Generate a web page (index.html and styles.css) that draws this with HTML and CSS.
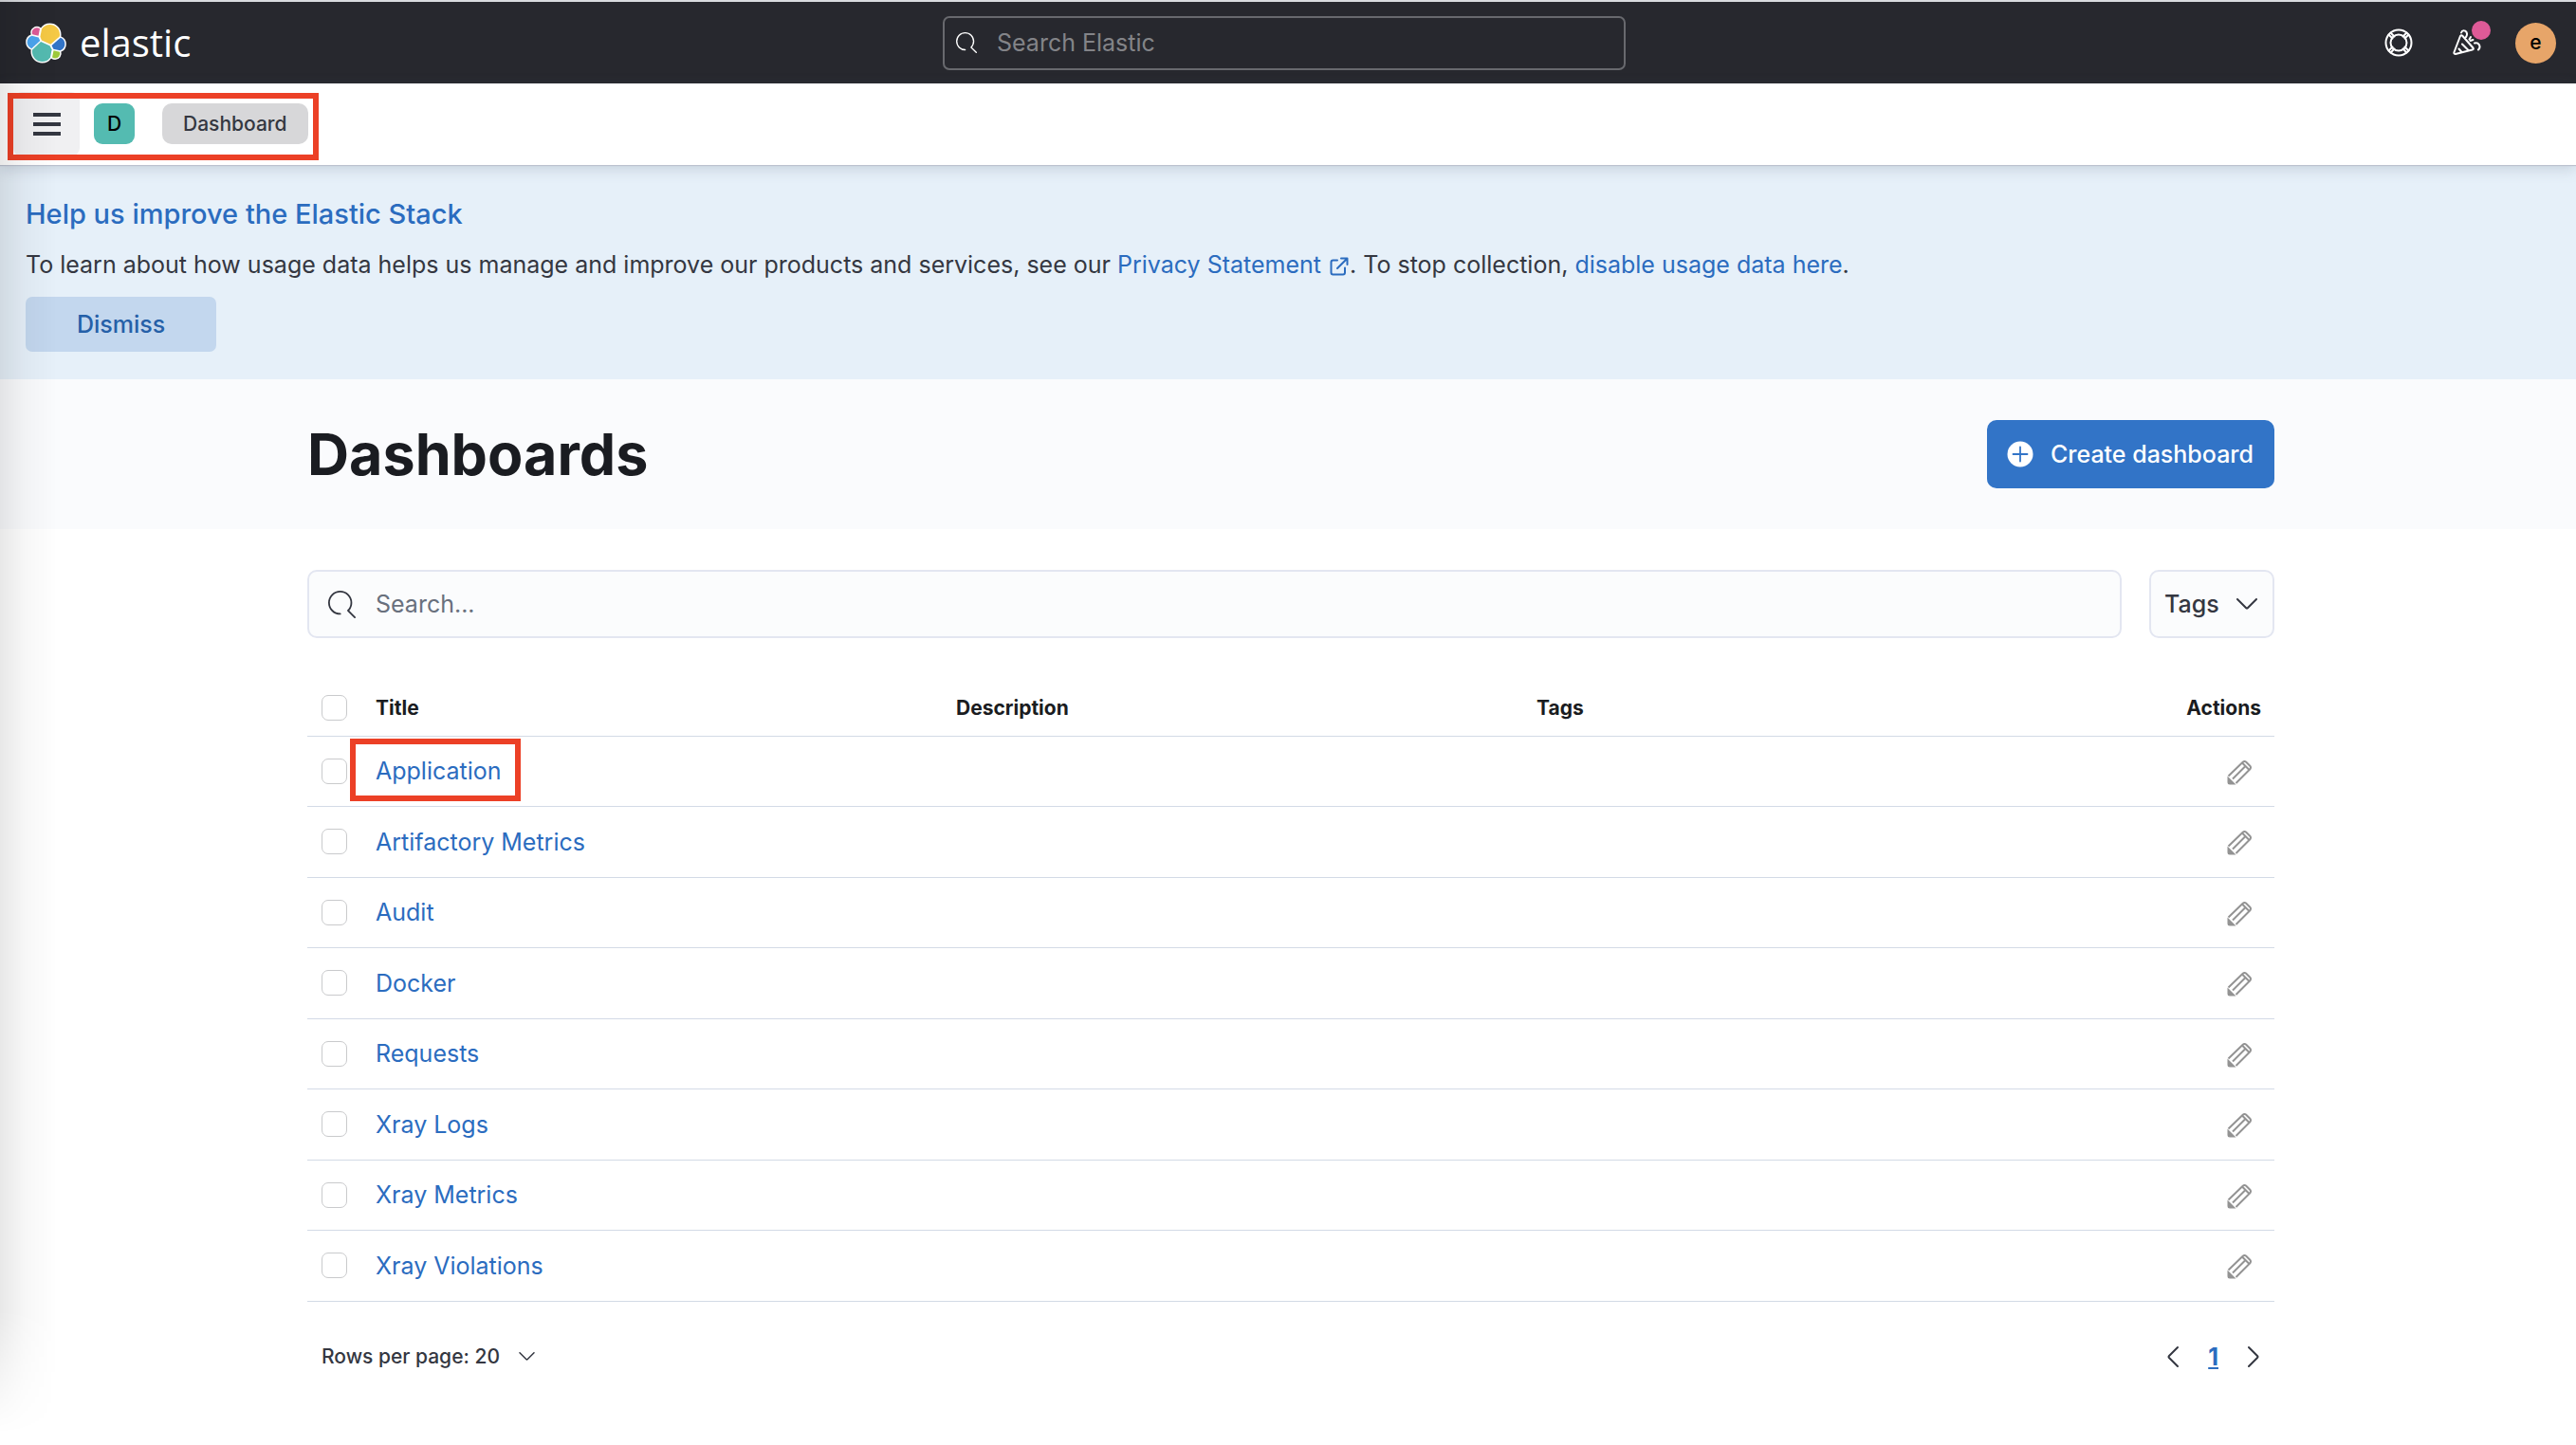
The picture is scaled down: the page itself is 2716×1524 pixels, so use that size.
FILE: index.html
```html
<!DOCTYPE html>
<html lang="en">
<head>
<meta charset="utf-8">
<title>Dashboards - Elastic</title>
<link rel="stylesheet" href="styles.css">
</head>
<body>
<svg class="sprite" aria-hidden="true">
  <symbol id="i-search" viewBox="0 0 16 16"><path d="m11.271 11.978 3.872 3.873a.502.502 0 0 0 .708 0 .502.502 0 0 0 0-.708l-3.565-3.564c2.38-2.747 2.267-6.923-.342-9.532-2.73-2.73-7.17-2.73-9.898 0-2.728 2.729-2.728 7.17 0 9.9a6.955 6.955 0 0 0 4.949 2.05.5.5 0 0 0 0-1 5.96 5.96 0 0 1-4.242-1.757 6.01 6.01 0 0 1 0-8.486 6.004 6.004 0 0 1 8.484 0 6.01 6.01 0 0 1 0 8.486.5.5 0 0 0 .034.738Z"/></symbol>
  <symbol id="i-pencil" viewBox="0 0 26 26"><path fill="none" stroke="currentColor" stroke-width="2" stroke-linejoin="round" d="M1.5 16.500 17 1.500Q18.500 .500 20 1.500L24.500 6Q25.500 7.500 24.500 9L9.500 24M6 19.500 20 5.500M16.500 3 23 9.500"/><path d="M.5 16.500 9.500 25.500H3Q.5 25.500 .5 23Z"/></symbol>
  <symbol id="i-down" viewBox="0 0 22 12"><path fill="none" stroke="currentColor" stroke-width="2" stroke-linecap="round" stroke-linejoin="round" d="m1 1 9 9q1 1 2 0l9-9"/></symbol>
</svg>

<header class="topbar">
  <a class="logo" href="#" aria-label="Elastic home">
    <svg class="logo-mark" viewBox="0 0 32 32" aria-hidden="true">
      <g stroke="#fff" stroke-width="2.200" stroke-linejoin="round">
        <path d="M12.580 13.787l7.002 3.211 7.066-6.213a7.849 7.849 0 0 0 .152-1.557c0-4.287-3.464-7.762-7.738-7.762a7.728 7.728 0 0 0-6.387 3.379l-1.176 6.115z"/>
        <path d="M5.333 21.215c-.098.513-.148 1.034-.149 1.557 0 4.298 3.478 7.782 7.767 7.782a7.755 7.755 0 0 0 6.417-3.404l1.166-6.093-1.556-2.985-7.030-3.211z"/>
        <path d="M5.290 9.068l4.798 1.138 1.052-5.476a3.795 3.795 0 0 0-4.535-.020 3.827 3.827 0 0 0-1.315 4.358z"/>
        <path d="M4.873 10.215c-2.144.713-3.642 2.782-3.642 5.050 0 2.208 1.363 4.180 3.410 4.962l6.731-6.103-1.236-2.650z"/>
        <path d="M20.873 27.170a3.781 3.781 0 0 0 2.306.793 3.794 3.794 0 0 0 3.591-5.063l-4.792-1.124z"/>
        <path d="M21.848 20.563l5.280 1.238c2.146-.714 3.645-2.783 3.645-5.052a5.337 5.337 0 0 0-3.420-4.962l-6.906 6.069z"/>
      </g>
      <path fill="#f5c945" d="M12.580 13.787l7.002 3.211 7.066-6.213a7.849 7.849 0 0 0 .152-1.557c0-4.287-3.464-7.762-7.738-7.762a7.728 7.728 0 0 0-6.387 3.379l-1.176 6.115z"/>
      <path fill="#54bbb1" d="M5.333 21.215c-.098.513-.148 1.034-.149 1.557 0 4.298 3.478 7.782 7.767 7.782a7.755 7.755 0 0 0 6.417-3.404l1.166-6.093-1.556-2.985-7.030-3.211z"/>
      <path fill="#de5a97" d="M5.290 9.068l4.798 1.138 1.052-5.476a3.795 3.795 0 0 0-4.535-.020 3.827 3.827 0 0 0-1.315 4.358z"/>
      <path fill="#4ba4ee" d="M4.873 10.215c-2.144.713-3.642 2.782-3.642 5.050 0 2.208 1.363 4.180 3.410 4.962l6.731-6.103-1.236-2.650z"/>
      <path fill="#9dc93b" d="M20.873 27.170a3.781 3.781 0 0 0 2.306.793 3.794 3.794 0 0 0 3.591-5.063l-4.792-1.124z"/>
      <path fill="#3274c7" d="M21.848 20.563l5.280 1.238c2.146-.714 3.645-2.783 3.645-5.052a5.337 5.337 0 0 0-3.420-4.962l-6.906 6.069z"/>
    </svg>
    <span class="logo-word">elastic</span>
  </a>
  <label class="global-search">
    <svg class="icon" aria-hidden="true"><use href="#i-search"/></svg>
    <input type="search" placeholder="Search Elastic" aria-label="Search Elastic">
  </label>
  <div class="top-actions">
    <button class="icon-button" type="button" aria-label="Help">
      <svg class="help-icon line-icon" viewBox="0 0 30 30" aria-hidden="true"><circle cx="15" cy="15" r="13.500"/><circle cx="15" cy="15" r="8.500"/><path d="m4.500 6.500 4 4m-2-6 4 4m15-2-4 4m2-6-4 4m6 15-4-4m2 6-4-4m-15 2 4-4m-2 6 4-4"/></svg>
    </button>
    <button class="icon-button news" type="button" aria-label="News feed">
      <svg class="cheer-icon line-icon" viewBox="0 0 30 28" aria-hidden="true"><path d="M8 7Q9 5.500 10.500 7L21.500 19.500Q22.500 21 20.500 21.500L3 26Q1 26 1.500 24ZM10 15.500l7 7M6.500 20.500l3 3.500M9 3.500C10 .5 14.500.5 15 4.500 15.300 6 14.500 7 14 8M17.500 10.500 19 8M18.500 12l3-1M23 14.500C27 13 30.500 18 27 21.500"/></svg>
      <span class="news-dot"></span>
    </button>
    <button class="avatar" type="button" aria-label="Account menu">e</button>
  </div>
</header>

<nav class="subbar" aria-label="Breadcrumbs">
  <div class="nav-group">
    <button class="menu-button" type="button" aria-label="Toggle primary navigation"><span></span><span></span><span></span></button>
    <button class="space" type="button" aria-label="Default space">D</button>
    <a class="crumb" href="#" aria-current="page">Dashboard</a>
  </div>
</nav>

<section class="notice">
  <h2>Help us improve the Elastic Stack</h2>
  <p>To learn about how usage data helps us manage and improve our products and services, see our <a href="#">Privacy Statement <svg class="popout line-icon" viewBox="0 0 20 20" aria-hidden="true"><path d="M8 3.500H3.500Q1.500 3.500 1.500 5.500V16.500Q1.500 18.500 3.500 18.500H14Q16 18.500 16 16.500V11.500M12 1.500h6.500V8M18 2 8 12"/></svg></a>. To stop collection, <a href="#">disable usage data here</a>.</p>
  <button class="dismiss" type="button">Dismiss</button>
</section>

<div class="page-head">
  <div class="container head-row">
    <h1>Dashboards</h1>
    <button class="create" type="button">
      <svg viewBox="0 0 28 28" aria-hidden="true"><circle cx="14" cy="14" r="13.500" fill="#fff"/><path fill="none" stroke="#3274c7" stroke-width="1.800" stroke-linecap="round" d="M14 6.500v15M6.500 14h15"/></svg>
      Create dashboard
    </button>
  </div>
</div>

<main class="container">
  <div class="filters">
    <label class="search">
      <svg class="icon" aria-hidden="true"><use href="#i-search"/></svg>
      <input type="search" placeholder="Search..." aria-label="Search dashboards">
    </label>
    <div class="tags">
      <select aria-label="Tags"><option>Tags</option></select>
      <svg class="chevron" aria-hidden="true"><use href="#i-down"/></svg>
    </div>
  </div>

  <table>
    <thead>
      <tr><th class="check"><input type="checkbox" aria-label="Select all rows"></th><th>Title</th><th>Description</th><th>Tags</th><th class="actions">Actions</th></tr>
    </thead>
    <tbody>
      <tr><td class="check"><input type="checkbox" aria-label="Select Application"></td><td><a class="marked" href="#">Application</a></td><td></td><td></td><td class="actions"><button type="button" aria-label="Edit Application"><svg aria-hidden="true"><use href="#i-pencil"/></svg></button></td></tr>
      <tr><td class="check"><input type="checkbox" aria-label="Select Artifactory Metrics"></td><td><a href="#">Artifactory Metrics</a></td><td></td><td></td><td class="actions"><button type="button" aria-label="Edit Artifactory Metrics"><svg aria-hidden="true"><use href="#i-pencil"/></svg></button></td></tr>
      <tr><td class="check"><input type="checkbox" aria-label="Select Audit"></td><td><a href="#">Audit</a></td><td></td><td></td><td class="actions"><button type="button" aria-label="Edit Audit"><svg aria-hidden="true"><use href="#i-pencil"/></svg></button></td></tr>
      <tr><td class="check"><input type="checkbox" aria-label="Select Docker"></td><td><a href="#">Docker</a></td><td></td><td></td><td class="actions"><button type="button" aria-label="Edit Docker"><svg aria-hidden="true"><use href="#i-pencil"/></svg></button></td></tr>
      <tr><td class="check"><input type="checkbox" aria-label="Select Requests"></td><td><a href="#">Requests</a></td><td></td><td></td><td class="actions"><button type="button" aria-label="Edit Requests"><svg aria-hidden="true"><use href="#i-pencil"/></svg></button></td></tr>
      <tr><td class="check"><input type="checkbox" aria-label="Select Xray Logs"></td><td><a href="#">Xray Logs</a></td><td></td><td></td><td class="actions"><button type="button" aria-label="Edit Xray Logs"><svg aria-hidden="true"><use href="#i-pencil"/></svg></button></td></tr>
      <tr><td class="check"><input type="checkbox" aria-label="Select Xray Metrics"></td><td><a href="#">Xray Metrics</a></td><td></td><td></td><td class="actions"><button type="button" aria-label="Edit Xray Metrics"><svg aria-hidden="true"><use href="#i-pencil"/></svg></button></td></tr>
      <tr><td class="check"><input type="checkbox" aria-label="Select Xray Violations"></td><td><a href="#">Xray Violations</a></td><td></td><td></td><td class="actions"><button type="button" aria-label="Edit Xray Violations"><svg aria-hidden="true"><use href="#i-pencil"/></svg></button></td></tr>
    </tbody>
  </table>

  <div class="table-foot">
    <div class="per-page">
      <select aria-label="Rows per page"><option>Rows per page: 20</option></select>
      <svg class="chevron" aria-hidden="true"><use href="#i-down"/></svg>
    </div>
    <nav class="pager" aria-label="Pagination">
      <button type="button" aria-label="Previous page"><svg viewBox="0 0 12 24" aria-hidden="true"><path d="M11 2 2 11q-1 1 0 2l9 9"/></svg></button>
      <a href="#" aria-current="page">1</a>
      <button type="button" aria-label="Next page"><svg viewBox="0 0 12 24" aria-hidden="true"><path d="m1 2 9 9q1 1 0 2l-9 9"/></svg></button>
    </nav>
  </div>
</main>
</body>
</html>
```
FILE: styles.css
```css
* { box-sizing: border-box; }

body {
  margin: 0;
  position: relative;
  min-height: 100vh;
  background: #fff;
  color: #343741;
  font: 25px/36px Inter, "Liberation Sans", sans-serif;
}

/* soft shadow along the left edge of the window */
body::after {
  content: "";
  position: absolute;
  inset: 0 auto 12px 0;
  width: 60px;
  background: linear-gradient(to right, rgba(0, 0, 0, .09), rgba(0, 0, 0, .03) 45%, transparent);
  mask-image: linear-gradient(to top, transparent, #000 130px);
  pointer-events: none;
}

button, input, select { font: inherit; color: inherit; margin: 0; }
button { border: 0; padding: 0; background: none; display: flex; align-items: center; justify-content: center; }
select { appearance: none; border: 0; background: none; padding: 0; }
input[type="search"] { appearance: none; flex: 1; min-width: 0; border: 0; padding: 0; background: none; outline: 0; }
a { color: #2b6cbf; text-decoration: none; }
svg { fill: currentColor; display: block; flex: none; }
.sprite { position: absolute; width: 0; height: 0; }
.line-icon { fill: none; stroke: currentColor; stroke-width: 2; stroke-linecap: round; stroke-linejoin: round; }

/* top bar */
.topbar {
  display: grid;
  grid-template-columns: 1fr 720px 1fr;
  align-items: center;
  height: 88px;
  padding: 0 21px 0 13px;
  border-top: 2px solid #d9dbdf;
  background: #27282e;
  color: #fff;
}
.logo { display: flex; align-items: center; gap: 14px; padding-left: 14px; color: #fff; }
.logo-mark { width: 43px; height: 43px; overflow: visible; }
.logo-word { font: 400 40px/48px "Open Sans", "Noto Sans", sans-serif; }
.global-search {
  display: flex;
  align-items: center;
  gap: 21px;
  height: 57px;
  padding: 0 12px;
  border: 2px solid #68696e;
  border-radius: 7px;
}
.global-search .icon { width: 22px; height: 22px; }
.global-search input::placeholder { color: #838488; opacity: 1; }
.top-actions { display: flex; align-items: center; justify-content: flex-end; gap: 36px; }
.help-icon { width: 30px; height: 30px; }
.cheer-icon { width: 30px; height: 28px; }
.icon-button { width: 36px; height: 43px; color: #fff; }
.news { position: relative; margin-right: -3px; }
.news-dot { position: absolute; top: -2px; right: -7px; width: 20px; height: 20px; border-radius: 50%; background: #de5a97; }
.avatar { width: 43px; height: 43px; border-radius: 50%; background: #e7a569; color: #000; font-size: 21px; font-weight: 500; }

/* breadcrumb bar */
.subbar {
  position: relative;
  display: flex;
  height: 86px;
  padding: 10px 8px 4px;
  background: #fff;
  box-shadow: 0 1px 1px #bcc2cf, 0 4px 14px rgba(80, 95, 120, .22);
}
.nav-group {
  display: flex;
  align-items: center;
  height: 71px;
  padding: 0 11px 6px 6px;
  outline: 6px solid #ec4026;
  outline-offset: -6px;
}
.menu-button { flex-direction: column; gap: 6px; width: 70px; height: 68px; border-radius: 9px; background: #f0f0f2; }
.menu-button span { width: 29px; height: 4px; background: #343741; }
.space { width: 43px; height: 43px; margin-left: 15px; border-radius: 9px; background: #54bbb1; color: #000; font-size: 21px; font-weight: 500; }
.crumb { margin-left: 29px; padding: 0 22px; border-radius: 10px; background: #d7d7d9; color: #343741; font-size: 21px; font-weight: 500; line-height: 43px; }

/* usage data notice */
.notice { display: flex; flex-direction: column; align-items: flex-start; height: 226px; padding: 34px 27px 0; background: #e6f0f9; }
.notice h2 { margin: 0 0 17px; color: #2b6cbf; font-size: 29px; font-weight: 500; line-height: 36px; }
.notice p { margin: 0 0 16px; }
.popout { display: inline-block; width: 20px; height: 20px; vertical-align: -3px; margin: 0 1px 0 2px; }
.dismiss { width: 201px; height: 58px; border-radius: 7px; background: #c3d7ee; color: #2560a8; font-weight: 500; }

/* page header */
.container { max-width: 2080px; margin: 0 auto; padding-left: 6px; }
.page-head { background: #fafbfd; }
.head-row { display: flex; align-items: center; justify-content: space-between; height: 158px; }
h1 { margin: 0; color: #1a1c21; font-size: 61px; font-weight: 700; line-height: 72px; }
.create { gap: 18px; height: 72px; padding: 0 22px 0 21px; border-radius: 10px; background: #3274c7; color: #fff; font-weight: 500; }
.create svg { width: 28px; height: 28px; }

/* filters */
.filters { display: flex; gap: 29px; padding: 43px 0; }
.search, .tags { display: flex; align-items: center; height: 72px; border: 2px solid #e3e6f1; border-radius: 10px; background: #fbfcfd; }
.search { flex: 1; gap: 21px; padding: 0 20px; }
.search .icon { width: 29px; height: 29px; }
.search input::placeholder { color: #69707d; opacity: 1; }
.tags { gap: 18px; padding: 0 16px 0 14px; font-weight: 500; }
.tags .chevron { width: 22px; height: 12px; }

/* table */
table { width: 100%; table-layout: fixed; border-collapse: collapse; }
th, td { padding: 0 14px; border-bottom: 1px solid #d3dae6; text-align: left; vertical-align: middle; }
th { height: 60px; padding-top: 2px; color: #1a1c21; font-size: 21px; font-weight: 700; line-height: 32px; }
td { height: 75px; }
tbody tr:nth-child(odd) td { height: 74px; }
.check { width: 58px; padding-left: 15px; }
.actions { width: 180px; text-align: right; }
.actions button { width: 26px; height: 26px; margin: 3px 10px 0 auto; color: #939393; }
.actions svg { width: 26px; height: 26px; }
input[type="checkbox"] { appearance: none; display: block; width: 27px; height: 27px; border: 1px solid #c9cacc; border-radius: 7px; background: #fff; }
.marked { display: inline-block; position: relative; }
.marked::before { content: ""; position: absolute; inset: -16px -20px -14px -27px; border: 6px solid #ec4026; }

/* pagination */
.table-foot { display: flex; align-items: center; justify-content: space-between; height: 116px; padding: 0 16px 0 15px; }
.per-page { display: flex; align-items: center; gap: 20px; font-size: 21px; font-weight: 500; }
.per-page .chevron { width: 17px; height: 9px; }
.pager { display: flex; align-items: center; gap: 31px; }
.pager a { font-weight: 700; text-decoration: underline; }
.pager svg { width: 12px; height: 24px; fill: none; stroke: currentColor; stroke-width: 2; stroke-linecap: round; }
```
